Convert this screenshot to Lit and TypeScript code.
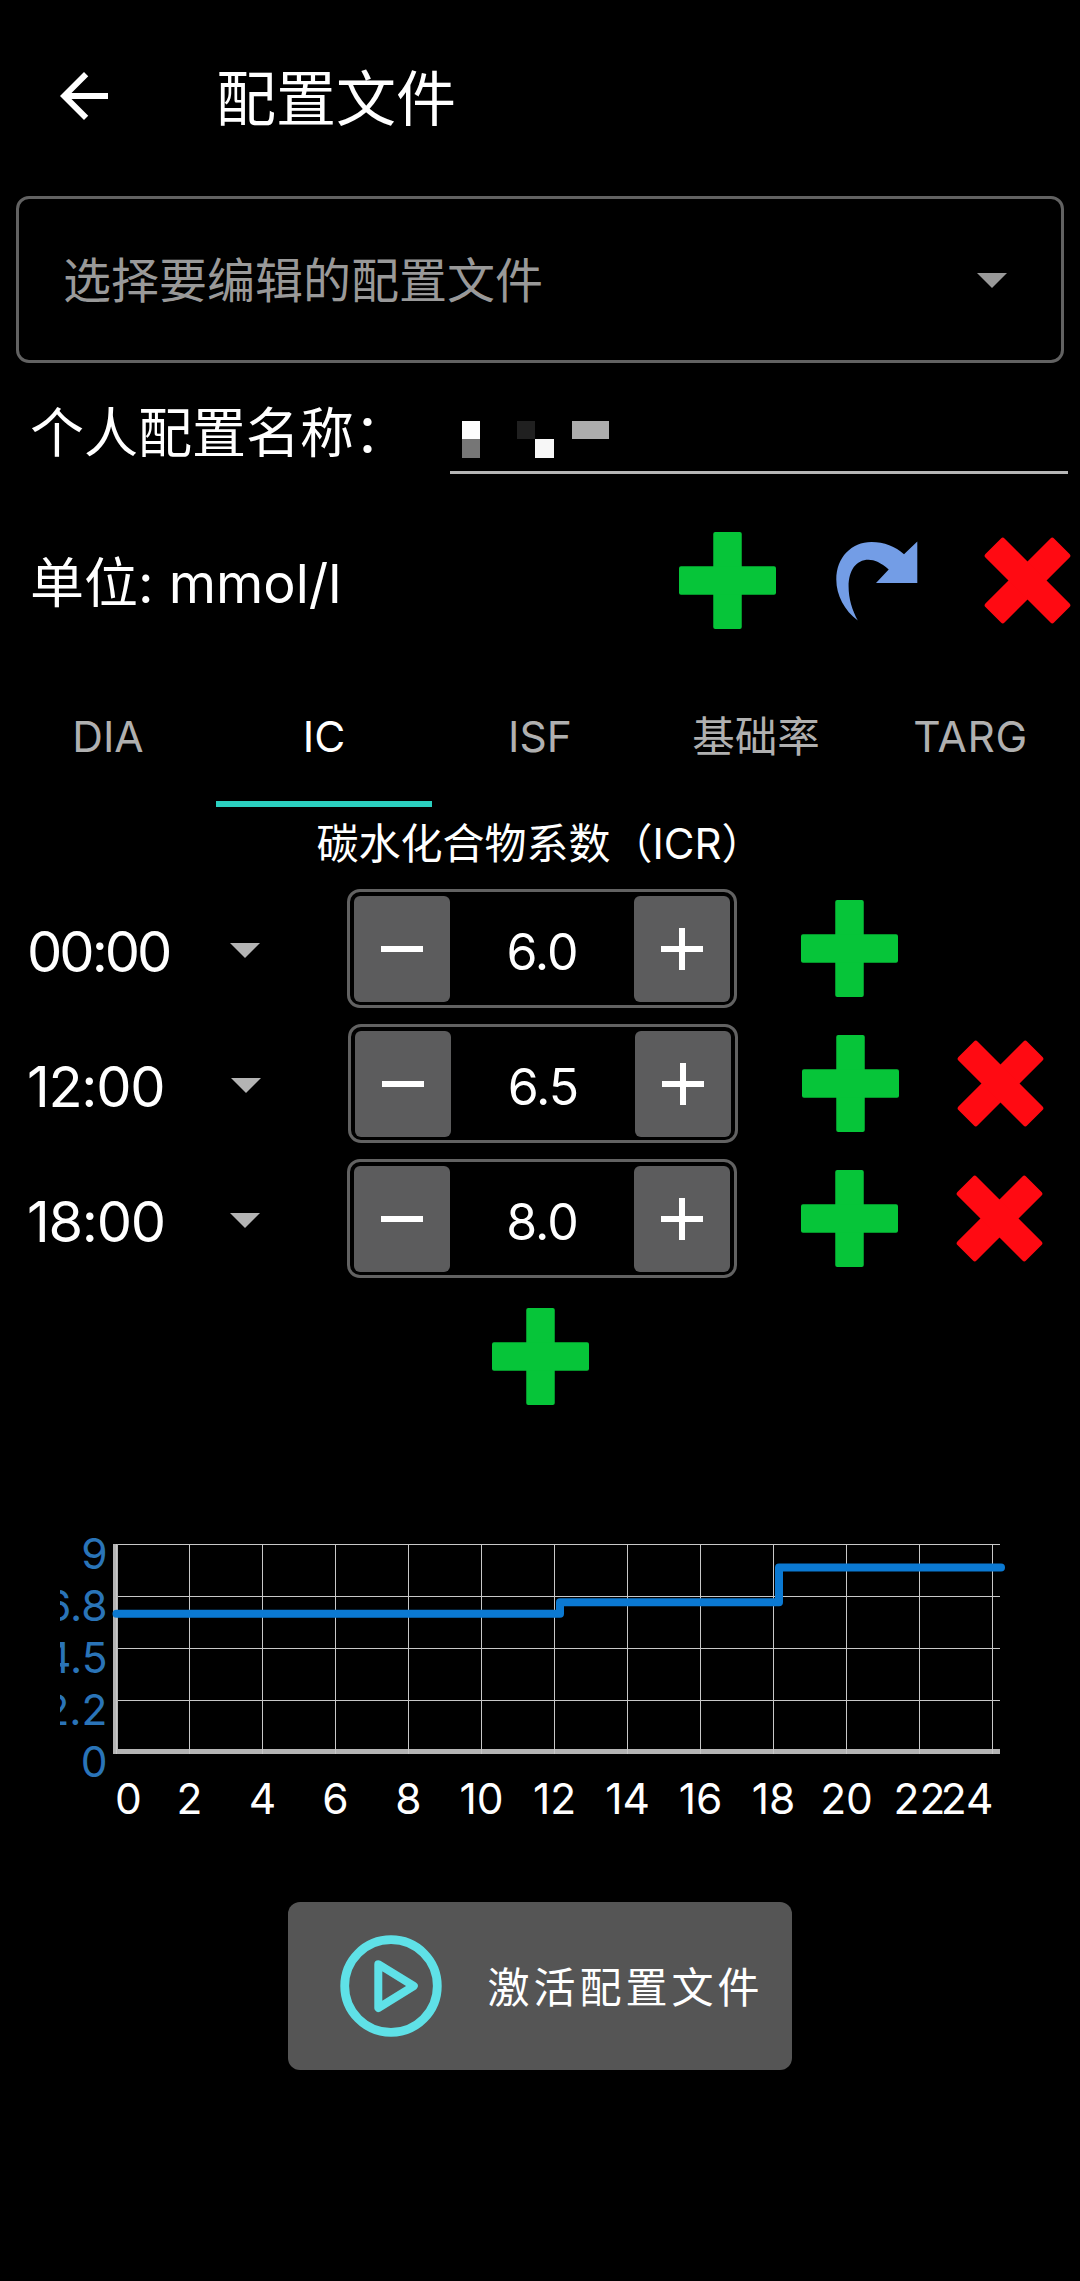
import { LitElement, html, svg, css } from "lit";
import { customElement, property, state } from "lit/decorators.js";
import { classMap } from "lit/directives/class-map.js";

type IconName = "back" | "add" | "clone" | "remove" | "caret" | "minus" | "plus" | "play";

@customElement("app-icon")
class AppIcon extends LitElement {
  @property() name: IconName = "add";

  static styles = css`
    :host {
      display: block;
      flex: none;
    }
    svg {
      display: block;
    }
  `;

  render() {
    switch (this.name) {
      case "back":
        return html`<svg width="72" height="72" viewBox="0 0 24 24" fill="#fff">
          <path d="M20 11H7.83l5.59-5.59L12 4l-8 8 8 8 1.41-1.41L7.83 13H20v-2z" />
        </svg>`;
      case "add":
        return html`<svg width="97" height="97" viewBox="0 0 97 97" fill="#06c539">
          <rect x="34.25" y="0" width="28.5" height="97" rx="2" />
          <rect x="0" y="34.25" width="97" height="28.5" rx="2" />
        </svg>`;
      case "clone":
        return html`<svg width="82" height="80" viewBox="0 0 82 80" fill="#739de6">
          <path
            d="M81.3 .5V42H40L52.700 28.500C45 21.8 38.5 18.8 32.5 18.8C20 18.8 12.6 29.5 12.6 45.5C12.6 58 16 68.5 21.800 79.500C8.5 69.5 .3 54.5 .3 38.5C.3 16.5 15.5 1 35.5 1C48 1 59.5 5.5 68 13.3Z"
          />
        </svg>`;
      case "remove":
        return html`<svg width="87" height="87" viewBox="-43.5 -43.5 87 87" fill="#ff0a12">
          <g transform="rotate(45)">
            <rect x="-13.5" y="-48.5" width="27" height="97" rx="2.5" />
            <rect x="-48.5" y="-13.5" width="97" height="27" rx="2.5" />
          </g>
        </svg>`;
      case "caret":
        return html`<svg width="30" height="15" viewBox="0 0 30 15" fill="currentColor">
          <path d="M0 0h30L15 15z" />
        </svg>`;
      case "minus":
        return html`<svg width="42" height="42" viewBox="0 0 42 42" fill="#fff">
          <rect y="18" width="42" height="6" />
        </svg>`;
      case "plus":
        return html`<svg width="42" height="42" viewBox="0 0 42 42" fill="#fff">
          <rect y="18" width="42" height="6" />
          <rect x="18" width="6" height="42" />
        </svg>`;
      case "play":
        return html`<svg width="102" height="102" viewBox="0 0 102 102" fill="none" stroke="#5fe1e7">
          <circle cx="51" cy="51" r="46.3" stroke-width="8.8" />
          <path d="M38.3 29.2L73.8 51L38.3 73Z" stroke-width="8" stroke-linejoin="round" />
        </svg>`;
    }
  }
}

@customElement("number-stepper")
class NumberStepper extends LitElement {
  @property({ type: Number }) value = 0;

  static styles = css`
    :host {
      display: block;
    }
    .box {
      box-sizing: border-box;
      display: flex;
      align-items: center;
      justify-content: space-between;
      width: 390px;
      height: 119px;
      padding: 0 4px;
      border: 3px solid #626262;
      border-radius: 13px;
    }
    .key {
      display: grid;
      place-items: center;
      width: 96px;
      height: 106px;
      border-radius: 6px;
      background: #5c5c5d;
    }
    .value {
      font-size: 50px;
      line-height: 121px;
      height: 113px;
      letter-spacing: -1px;
    }
  `;

  render() {
    return html`<div class="box">
      <div class="key"><app-icon name="minus"></app-icon></div>
      <div class="value">${this.value.toFixed(1)}</div>
      <div class="key"><app-icon name="plus"></app-icon></div>
    </div>`;
  }
}

interface Block {
  hour: number;
  value: number;
}

@customElement("profile-chart")
class ProfileChart extends LitElement {
  @property({ attribute: false }) blocks: Block[] = [];

  static styles = css`
    :host {
      display: block;
    }
    svg {
      display: block;
      overflow: hidden;
    }
    .grid {
      stroke: #c8c8c8;
      stroke-width: 1;
      shape-rendering: crispEdges;
    }
    .axis {
      fill: #b4b4b4;
    }
    .series {
      fill: none;
      stroke: #0b79d2;
      stroke-width: 8;
      stroke-linecap: round;
      stroke-linejoin: round;
    }
    .label {
      font-size: 42.5px;
    }
    .y {
      fill: #2a74b8;
      text-anchor: end;
    }
    .x {
      fill: #fff;
      text-anchor: middle;
    }
  `;

  private px(hour: number) {
    return 56.5 + hour * 36.5;
  }

  private py(value: number) {
    return 232 - value * 23.05;
  }

  private seriesPath() {
    let d = "";
    this.blocks.forEach((b, i) => {
      const next = this.blocks[i + 1];
      const from = i === 0 ? this.px(0) : this.px(b.hour) + 5.5;
      const to = next ? this.px(next.hour) + 5.5 : 941;
      d += `${i === 0 ? "M" : "L"}${from} ${this.py(b.value)}H${to}`;
    });
    return d;
  }

  render() {
    const hours = Array.from({ length: 13 }, (_, i) => i * 2);
    const levels = ["9", "6.8", "4.5", "2.2", "0"];
    return html`<svg width="960" height="310" viewBox="0 0 960 310">
      ${levels.map(
        (t, i) => svg`
          <line class="grid" x1="56" x2="940" y1=${24.5 + i * 52} y2=${24.5 + i * 52}></line>
          <text class="label y" x="47.5" y=${48.5 + i * 52.2}>${t}</text>`
      )}
      <rect class="axis" x="53" y="24" width="5" height="210"></rect>
      <rect class="axis" x="53" y="229" width="887" height="5"></rect>
      ${hours.map((h) => {
        const shift = h === 0 ? 12 : h === 24 ? -25.5 : 0;
        return svg`
          <line class="grid" x1=${this.px(h)} x2=${this.px(h)} y1="24" y2="234"></line>
          <text class="label x" x=${this.px(h) + shift} y="293.5">${h}</text>`;
      })}
      <path class="series" d=${this.seriesPath()}></path>
    </svg>`;
  }
}

@customElement("app-root")
class AppRoot extends LitElement {
  @state() private activeTab = 1;
  private tabs = ["DIA", "IC", "ISF", "基础率", "TARG"];
  private blocks: Block[] = [
    { hour: 0, value: 6 },
    { hour: 12, value: 6.5 },
    { hour: 18, value: 8 },
  ];

  static styles = css`
    :host {
      display: flex;
      flex-direction: column;
      width: 1080px;
      height: 2281px;
      overflow: hidden;
      background: #000;
      color: #fff;
      font-family: Inter, "Noto Sans CJK SC", sans-serif;
      white-space: nowrap;
    }
    .header {
      display: flex;
      align-items: center;
      gap: 96px;
      height: 192px;
      padding-left: 48px;
      margin-bottom: 4px;
    }
    .title {
      font-size: 60px;
      line-height: 78px;
      height: 72px;
    }
    .select {
      box-sizing: border-box;
      display: flex;
      align-items: center;
      justify-content: space-between;
      height: 167px;
      margin: 0 16px;
      padding: 2px 54px 0 44px;
      border: 3px solid #626262;
      border-radius: 13px;
      color: #999;
    }
    .hint {
      font-size: 48px;
      line-height: 60px;
      height: 60px;
    }
    .name-row {
      display: flex;
      justify-content: space-between;
      height: 137px;
      padding: 0 12px 0 30px;
    }
    .label {
      font-size: 54px;
      line-height: 78px;
      height: 72px;
    }
    .name-row .label {
      margin-top: 32px;
    }
    .field {
      box-sizing: border-box;
      width: 618px;
      height: 111px;
      padding: 58px 0 0 12px;
      border-bottom: 3px solid #b6b6b6;
    }
    .mask {
      display: grid;
      grid-template-columns: 18px 37px 18px 19px 18px 37px;
      grid-template-rows: 18px 19px;
    }
    .m1 { grid-area: 1 / 1; background: #fdfdfd; }
    .m2 { grid-area: 2 / 1; background: #767676; }
    .m3 { grid-area: 1 / 3; background: #202020; }
    .m4 { grid-area: 2 / 4; background: #f7f7f7; }
    .m5 { grid-area: 1 / 6; background: #acacac; }
    .unit-row {
      display: flex;
      align-items: center;
      height: 161px;
      padding: 0 9px 0 30px;
    }
    .unit-row .label {
      flex: 1;
    }
    .actions {
      display: flex;
      align-items: center;
    }
    .actions .clone {
      margin: 0 66px 0 60px;
    }
    .tabs {
      display: grid;
      grid-template-columns: repeat(5, 1fr);
      height: 146px;
    }
    .tab {
      box-sizing: border-box;
      height: 146px;
      border-bottom: 6px solid transparent;
      text-align: center;
      font-size: 42.5px;
      line-height: 152px;
      color: #b0b0b0;
      overflow: hidden;
    }
    .tab.active {
      color: #fff;
      border-bottom-color: #2bd0c0;
    }
    .tab.wide {
      letter-spacing: 0.6px;
      padding-right: 3px;
    }
    .section {
      height: 74px;
      text-align: center;
      font-size: 42px;
      line-height: 73px;
    }
    .row {
      display: grid;
      grid-template-columns: 230px 30px 87px 390px 64px 97px 58px 87px;
      align-items: center;
      height: 135px;
    }
    .row.nudged {
      grid-template-columns: 231px 30px 87px 390px 64px 97px 58px 87px;
    }
    .time {
      padding-left: 27px;
      font-size: 56px;
      line-height: 78px;
      height: 72px;
      letter-spacing: -1.3px;
    }
    .time.narrow {
      letter-spacing: -3px;
    }
    .caret {
      grid-column: 2;
      padding-top: 4px;
      color: #b4b4b4;
    }
    .stepper { grid-column: 4; }
    .insert { grid-column: 6; }
    .delete { grid-column: 8; }
    .append {
      display: grid;
      place-items: center;
      height: 141px;
      margin-bottom: 93px;
    }
    .chart {
      margin-left: 60px;
      height: 310px;
      margin-bottom: 72px;
    }
    .activate {
      box-sizing: border-box;
      align-self: center;
      display: flex;
      align-items: center;
      gap: 46px;
      width: 504px;
      height: 168px;
      padding-left: 51.5px;
      border-radius: 12px;
      background: #555;
    }
    .activate-text {
      font-size: 42px;
      line-height: 64px;
      height: 60px;
      letter-spacing: 4px;
    }
  `;

  render() {
    return html`
      <div class="header">
        <app-icon name="back"></app-icon>
        <div class="title">配置文件</div>
      </div>
      <div class="select">
        <div class="hint">选择要编辑的配置文件</div>
        <app-icon name="caret"></app-icon>
      </div>
      <div class="name-row">
        <div class="label">个人配置名称：</div>
        <div class="field">
          <div class="mask">
            <i class="m1"></i><i class="m2"></i><i class="m3"></i><i class="m4"></i><i class="m5"></i>
          </div>
        </div>
      </div>
      <div class="unit-row">
        <div class="label">单位: mmol/l</div>
        <div class="actions">
          <app-icon name="add"></app-icon>
          <app-icon class="clone" name="clone"></app-icon>
          <app-icon name="remove"></app-icon>
        </div>
      </div>
      <div class="tabs">
        ${this.tabs.map(
          (t, i) => html`<div
            class=${classMap({ tab: true, active: i === this.activeTab, wide: t.length > 3 })}
            @click=${() => (this.activeTab = i)}
          >${t}</div>`
        )}
      </div>
      <div class="section">碳水化合物系数（ICR）</div>
      ${this.blocks.map(
        (b, i) => html`<div class=${classMap({ row: true, nudged: i === 1 })}>
          <div class=${classMap({ time: true, narrow: b.hour < 10 })}>${String(b.hour).padStart(2, "0")}:00</div>
          <app-icon class="caret" name="caret"></app-icon>
          <number-stepper class="stepper" .value=${b.value}></number-stepper>
          <app-icon class="insert" name="add"></app-icon>
          ${i > 0 ? html`<app-icon class="delete" name="remove"></app-icon>` : null}
        </div>`
      )}
      <div class="append"><app-icon name="add"></app-icon></div>
      <profile-chart class="chart" .blocks=${this.blocks}></profile-chart>
      <div class="activate">
        <app-icon name="play"></app-icon>
        <div class="activate-text">激活配置文件</div>
      </div>
    `;
  }
}
